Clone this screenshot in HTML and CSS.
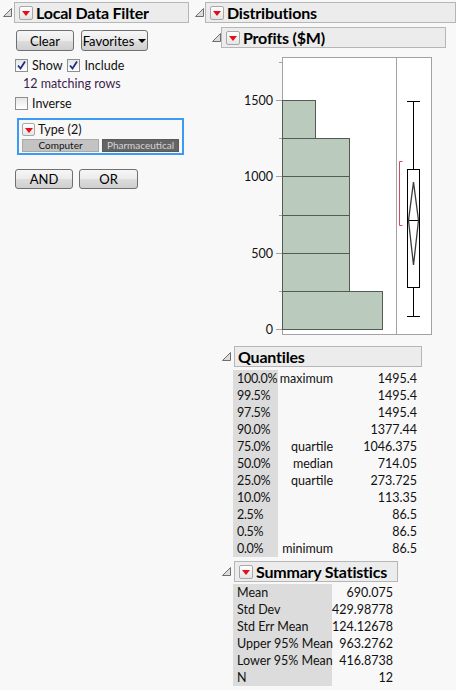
FILE: index.html
```html
<!DOCTYPE html>
<html>
<head>
<meta charset="utf-8">
<link rel="stylesheet" href="styles.css">
</head>
<body>
<div class="page">
  <div class="col-left">
    <div class="outline">
      <svg class="disc" width="9" height="9" viewBox="0 0 9 9"><polygon points="8.5,0.5 8.5,8.5 0.5,8.5" fill="#dcdcdc" stroke="#6e6e6e"/></svg>
      <div class="hdr hdr-top w-ldf"><span class="rt"></span><span class="title">Local Data Filter</span></div>
    </div>
    <div class="ldf">
      <div class="btnrow">
        <div class="btn btn-clear">Clear</div>
        <div class="btn btn-fav">Favorites <span class="caret"></span></div>
      </div>
      <div class="checkrow">
        <span class="cb"><svg width="11" height="11" viewBox="0 0 11 11"><path d="M2 5.5 L4.5 8.5 L9 1.5" fill="none" stroke="#1f2f86" stroke-width="1.8"/></svg></span><span class="cbl">Show</span>
        <span class="cb cb2"><svg width="11" height="11" viewBox="0 0 11 11"><path d="M2 5.5 L4.5 8.5 L9 1.5" fill="none" stroke="#1f2f86" stroke-width="1.8"/></svg></span><span class="cbl">Include</span>
      </div>
      <div class="matching">12 matching rows</div>
      <div class="checkrow inv">
        <span class="cb empty"></span><span class="cbl">Inverse</span>
      </div>
      <div class="typebox">
        <div class="typehead"><span class="rt"></span><span>Type (2)</span></div>
        <div class="levels">
          <div class="lvl lvl-on">Computer</div>
          <div class="lvl lvl-sel">Pharmaceutical</div>
        </div>
      </div>
      <div class="btnrow btnrow2">
        <div class="btn btn-and">AND</div>
        <div class="btn btn-or">OR</div>
      </div>
    </div>
  </div>

  <div class="col-right">
    <div class="outline">
      <svg class="disc" width="9" height="9" viewBox="0 0 9 9"><polygon points="8.5,0.5 8.5,8.5 0.5,8.5" fill="#dcdcdc" stroke="#6e6e6e"/></svg>
      <div class="hdr hdr-top w-dist"><span class="rt"></span><span class="title">Distributions</span></div>
    </div>
    <div class="nest1">
      <div class="outline">
        <svg class="disc" width="9" height="9" viewBox="0 0 9 9"><polygon points="8.5,0.5 8.5,8.5 0.5,8.5" fill="#dcdcdc" stroke="#6e6e6e"/></svg>
        <div class="hdr w-prof"><span class="rt"></span><span class="title">Profits ($M)</span></div>
      </div>

      <svg class="plot" width="215" height="290" viewBox="230 52 215 290">
        <rect x="282.5" y="57.5" width="149" height="277" fill="#ffffff" stroke="#a3a3a3"/>
        <line x1="396.5" y1="57.5" x2="396.5" y2="334.5" stroke="#a3a3a3"/>
        <g stroke="#a3a3a3">
          <line x1="276" y1="100.5" x2="282" y2="100.5"/>
          <line x1="276" y1="176.5" x2="282" y2="176.5"/>
          <line x1="276" y1="253.5" x2="282" y2="253.5"/>
          <line x1="276" y1="329.5" x2="282" y2="329.5"/>
          <line x1="279" y1="62.5" x2="282" y2="62.5"/>
          <line x1="279" y1="138.5" x2="282" y2="138.5"/>
          <line x1="279" y1="215.5" x2="282" y2="215.5"/>
          <line x1="279" y1="291.5" x2="282" y2="291.5"/>
        </g>
        <g class="axlab" text-anchor="end">
          <text x="273" y="105">1500</text>
          <text x="273" y="181">1000</text>
          <text x="273" y="258">500</text>
          <text x="273" y="334">0</text>
        </g>
        <g fill="#bacabc" stroke="#545b53">
          <rect x="282.5" y="291.5" width="100" height="38"/>
          <rect x="282.5" y="253.5" width="67" height="38"/>
          <rect x="282.5" y="215.5" width="67" height="38"/>
          <rect x="282.5" y="176.5" width="67" height="39"/>
          <rect x="282.5" y="138.5" width="67" height="38"/>
          <rect x="282.5" y="100.5" width="33" height="38"/>
        </g>
        <path d="M402.5 161.5 H399.5 V225.5 H402.5" fill="none" stroke="#d24b5c"/>
        <g stroke="#000" fill="none">
          <line x1="413.5" y1="101" x2="413.5" y2="169"/>
          <line x1="413.5" y1="288" x2="413.5" y2="316"/>
          <line x1="407" y1="101.5" x2="420" y2="101.5"/>
          <line x1="407" y1="316.5" x2="420" y2="316.5"/>
          <rect x="407.5" y="169.5" width="12" height="118" fill="#fff"/>
          <line x1="407.5" y1="220.5" x2="419.5" y2="220.5"/>
        </g>
        <polygon points="413.5,182 418.5,220.5 413.5,265 408.5,220.5" fill="none" stroke="#3a3a3a" stroke-width="1.3"/>
      </svg>

      <div class="nest2">
        <div class="outline">
          <svg class="disc" width="9" height="9" viewBox="0 0 9 9"><polygon points="8.5,0.5 8.5,8.5 0.5,8.5" fill="#dcdcdc" stroke="#6e6e6e"/></svg>
          <div class="hdr w-quant"><span class="title title-plain">Quantiles</span></div>
        </div>
        <div class="qtable">
          <div class="qc">100.0%</div><div class="ql">maximum</div><div class="qv">1495.4</div>
          <div class="qc">99.5%</div><div class="ql"></div><div class="qv">1495.4</div>
          <div class="qc">97.5%</div><div class="ql"></div><div class="qv">1495.4</div>
          <div class="qc">90.0%</div><div class="ql"></div><div class="qv">1377.44</div>
          <div class="qc">75.0%</div><div class="ql">quartile</div><div class="qv">1046.375</div>
          <div class="qc">50.0%</div><div class="ql">median</div><div class="qv">714.05</div>
          <div class="qc">25.0%</div><div class="ql">quartile</div><div class="qv">273.725</div>
          <div class="qc">10.0%</div><div class="ql"></div><div class="qv">113.35</div>
          <div class="qc">2.5%</div><div class="ql"></div><div class="qv">86.5</div>
          <div class="qc">0.5%</div><div class="ql"></div><div class="qv">86.5</div>
          <div class="qc">0.0%</div><div class="ql">minimum</div><div class="qv">86.5</div>
        </div>

        <div class="outline sum-outline">
          <svg class="disc" width="9" height="9" viewBox="0 0 9 9"><polygon points="8.5,0.5 8.5,8.5 0.5,8.5" fill="#dcdcdc" stroke="#6e6e6e"/></svg>
          <div class="hdr w-sum"><span class="rt"></span><span class="title">Summary Statistics</span></div>
        </div>
        <div class="stable">
          <div class="sc">Mean</div><div class="sv">690.075</div>
          <div class="sc">Std Dev</div><div class="sv">429.98778</div>
          <div class="sc">Std Err Mean</div><div class="sv">124.12678</div>
          <div class="sc">Upper 95% Mean</div><div class="sv">963.2762</div>
          <div class="sc">Lower 95% Mean</div><div class="sv">416.8738</div>
          <div class="sc">N</div><div class="sv">12</div>
        </div>
      </div>
    </div>
  </div>
</div>
</body>
</html>
```

FILE: styles.css
```css
html, body {
  margin: 0;
  padding: 0;
  background: #f8f8f8;
}
body {
  font-family: Lato, "Open Sans", sans-serif;
  font-size: 12.5px;
  color: #111;
  width: 456px;
  height: 690px;
  overflow: hidden;
}
.page {
  display: flex;
  align-items: flex-start;
}
.col-left {
  width: 195px;
  padding-top: 2px;
}
.col-right {
  flex: 1;
  padding-top: 2px;
}
.outline {
  display: flex;
  align-items: flex-start;
}
.disc {
  display: block;
  margin-top: 6px;
  flex: none;
}
.col-left > .outline .disc { margin-left: 3px; margin-right: 2px; }
.col-right > .outline .disc { margin-left: 0; margin-right: 1px; }
.hdr {
  box-sizing: border-box;
  height: 21px;
  border: 1px solid #b6b6b6;
  background: #ececec;
  display: flex;
  align-items: center;
  padding-left: 4px;
  gap: 3px;
}
.w-ldf { width: 175px; }
.w-dist { width: 251px; }
.w-prof { width: 225px; }
.w-quant { width: 188px; }
.w-sum { width: 164px; }
.title {
  font-weight: bold;
  font-size: 16px;
  color: #000;
  letter-spacing: -0.2px;
}
.title-plain { margin-left: -1px; }
.rt {
  box-sizing: border-box;
  width: 14px;
  height: 14px;
  border: 1px solid #a8a8a8;
  border-radius: 2px;
  background: linear-gradient(#ffffff, #e4e4e4);
  display: flex;
  align-items: center;
  justify-content: center;
  flex: none;
}
.rt::after {
  content: "";
  width: 0;
  height: 0;
  border-left: 4px solid transparent;
  border-right: 4px solid transparent;
  border-top: 5px solid #e3101c;
  margin-top: 1px;
}

/* Local data filter */
.ldf {
  padding-left: 15px;
  font-size: 12.5px;
}
.btnrow {
  display: flex;
  gap: 7px;
  margin-top: 7px;
  padding-left: 1px;
}
.btn {
  box-sizing: border-box;
  height: 21px;
  border: 1px solid #707070;
  border-radius: 3px;
  background: linear-gradient(#f6f6f6 0%, #ebebeb 50%, #dddddd 51%, #cfcfcf 100%);
  display: flex;
  align-items: center;
  justify-content: center;
  color: #000;
  font-size: 13px;
}
.btn-clear { width: 58px; }
.btn-fav { width: 67px; gap: 4px; }
.caret {
  width: 0;
  height: 0;
  border-left: 4px solid transparent;
  border-right: 4px solid transparent;
  border-top: 4px solid #000;
}
.checkrow {
  display: flex;
  align-items: center;
  margin-top: 7px;
  height: 14px;
}
.cb {
  box-sizing: border-box;
  width: 13px;
  height: 13px;
  border: 1px solid #8e8f8f;
  background: linear-gradient(#e6e6e6, #ffffff);
  display: flex;
  align-items: center;
  justify-content: center;
}
.cb svg { display: block; }
.cbl { margin-left: 4px; }
.cb2 { margin-left: 5px; }
.matching {
  margin-top: 3px;
  padding-left: 8px;
  color: #3d1e4c;
  height: 17px;
  line-height: 17px;
}
.checkrow.inv { margin-top: 4px; }
.typebox {
  box-sizing: border-box;
  width: 167px;
  height: 37px;
  margin-left: 2px;
  margin-top: 8px;
  border: 2px solid #3a9bf4;
  padding: 3px 0 0 3px;
}
.typehead {
  display: flex;
  align-items: center;
  gap: 3px;
  height: 13px;
}
.typehead .rt { width: 13px; height: 13px; }
.levels {
  display: flex;
  gap: 3px;
  margin-top: 3px;
}
.lvl {
  box-sizing: border-box;
  width: 77px;
  height: 13px;
  font-size: 10px;
  line-height: 11px;
  text-align: center;
  border: 1px solid #a9a9a9;
}
.lvl-on { background: #c3c3c3; color: #111; }
.lvl-sel { background: #646464; color: #d6d6d6; border-color: #5a5a5a; }
.btnrow2 { margin-top: 14px; gap: 6px; padding-left: 0; }
.btnrow2 .btn { height: 20px; }
.btn-and { width: 58px; }
.btn-or { width: 59px; }

/* Right side */
.nest1 {
  padding-left: 17px;
  margin-top: 4px;
}
.plot {
  display: block;
  margin-left: 18px;
  margin-top: 4px;
}
.axlab {
  font-family: Lato, "Open Sans", sans-serif;
  font-size: 12.5px;
  fill: #111;
}
.nest2 {
  padding-left: 10px;
  margin-top: 4px;
}
.nest2 .disc { margin-right: 3px; }
.qtable {
  display: grid;
  grid-template-columns: 45px 55px 84px;
  grid-auto-rows: 17px;
  margin-top: 3px;
  margin-left: 11px;
}
.qtable > div { line-height: 17px; white-space: nowrap; }
.qc { background: #dcdcdc; padding-left: 4px; letter-spacing: -0.3px; }
.ql { text-align: right; }
.qv { text-align: right; }
.sum-outline { margin-top: 4px; }
.stable {
  display: grid;
  grid-template-columns: 99px 61px;
  grid-auto-rows: 17px;
  margin-top: 2px;
  margin-left: 11px;
}
.stable > div { line-height: 17px; white-space: nowrap; }
.sc { background: #dcdcdc; padding-left: 4px; }
.sv { text-align: right; }
```
